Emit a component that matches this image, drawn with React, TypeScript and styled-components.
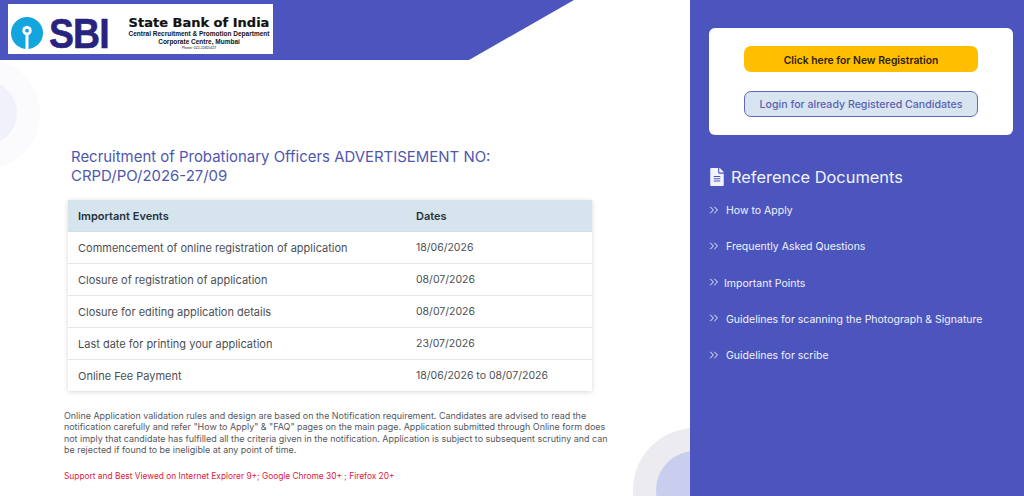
import React from 'react';
import styled, { createGlobalStyle } from 'styled-components';
import { ChevronsRight } from 'lucide-react';
import { FaFileAlt } from 'react-icons/fa';

const indigo = '#4c55bd';

const GlobalStyle = createGlobalStyle`
  html, body {
    margin: 0;
    padding: 0;
    background: #fff;
    font-family: Inter, "Liberation Sans", sans-serif;
  }
`;

const Page = styled.div`
  display: flex;
  width: 1024px;
  height: 496px;
  overflow: hidden;
`;

const Main = styled.main`
  position: relative;
  width: 690px;
  flex: none;
  overflow: hidden;
`;

const Ring = styled.div<{ $size: number; $left: number; $top: number; $color: string }>`
  position: absolute;
  width: ${p => p.$size}px;
  height: ${p => p.$size}px;
  left: ${p => p.$left}px;
  top: ${p => p.$top}px;
  border-radius: 50%;
  background: ${p => p.$color};
`;

const Banner = styled.header`
  position: relative;
  height: 60px;
  width: 574px;
  padding: 4px 0 0 8px;
  box-sizing: border-box;
  background: ${indigo};
  clip-path: polygon(0 0, 100% 0, 469px 100%, 0 100%);
`;

const Logo = styled.div`
  display: flex;
  align-items: center;
  width: 265px;
  height: 50px;
  padding-top: 8px;
  box-sizing: border-box;
  background: #fff;
`;

const Mark = styled.svg`
  flex: none;
  width: 32px;
  height: 32px;
  margin-left: 3px;
`;

const SbiWord = styled.span`
  flex: none;
  width: 58px;
  margin-left: 6px;
  font-family: "Liberation Sans", sans-serif;
  font-size: 43px;
  line-height: 34px;
  font-weight: 700;
  letter-spacing: -1px;
  color: #28237f;
  -webkit-text-stroke: 0.6px #28237f;
  transform: scaleX(0.87);
  transform-origin: left center;
`;

const LogoText = styled.div`
  flex: 1;
  display: flex;
  flex-direction: column;
  align-items: center;
  margin-left: 18px;
  font-family: "Liberation Sans", sans-serif;
  color: #111;
`;

const LogoTitle = styled.div`
  font-family: "DejaVu Sans", sans-serif;
  font-size: 13px;
  line-height: 14px;
  font-weight: 700;
  white-space: nowrap;
  -webkit-text-stroke: 0.2px #111;
`;

const LogoSub = styled.div`
  font-size: 6.5px;
  line-height: 8px;
  font-weight: 700;
  white-space: nowrap;
`;

const LogoPhone = styled.div`
  font-size: 3.5px;
  line-height: 5px;
`;

const Content = styled.div`
  position: relative;
  padding: 88px 0 0 64px;
`;

const Title = styled.h1`
  margin: 0 0 14px 7px;
  width: 440px;
  font-size: 14.95px;
  line-height: 19px;
  font-weight: 400;
  color: #4f58ae;
`;

const EventTable = styled.div`
  width: 524px;
  margin-left: 4px;
  background: #fff;
  box-shadow: 0 1px 5px rgba(0, 0, 0, 0.16);
`;

const Row = styled.div<{ $head?: boolean }>`
  display: grid;
  grid-template-columns: 338px 1fr;
  align-items: center;
  height: 32px;
  padding-left: 10px;
  box-sizing: border-box;
  font-size: 11px;
  font-weight: ${p => (p.$head ? 600 : 400)};
  color: ${p => (p.$head ? '#27323c' : '#4b4f55')};
  background: ${p => (p.$head ? '#d6e4ee' : '#fff')};
  border-bottom: 1px solid ${p => (p.$head ? '#d2dde5' : '#e6e6e6')};

  &:last-child {
    border-bottom: 0;
    height: 31px;
  }
`;

const DateCell = styled.span`
  font-size: 10.5px;
`;

const Note = styled.p`
  width: 548px;
  margin: 19px 0 0;
  font-size: 8.94px;
  line-height: 11.4px;
  color: #54585c;
`;

const Support = styled.p`
  margin: 14px 0 0;
  font-size: 8.35px;
  line-height: 12px;
  color: #e0203a;
`;

const Side = styled.aside`
  flex: 1;
  padding: 28px 11px 0 19px;
  background: ${indigo};
`;

const ActionCard = styled.div`
  display: flex;
  flex-direction: column;
  align-items: center;
  gap: 19px;
  height: 107px;
  padding-top: 18px;
  box-sizing: border-box;
  background: #fff;
  border-radius: 6px;
`;

const ActionButton = styled.div<{ $primary?: boolean }>`
  display: flex;
  align-items: center;
  justify-content: center;
  width: 234px;
  height: 26px;
  padding-top: ${p => (p.$primary ? 2 : 1)}px;
  box-sizing: border-box;
  border-radius: 7px;
  font-size: ${p => (p.$primary ? 10.35 : 10.6)}px;
  font-weight: ${p => (p.$primary ? 600 : 500)};
  background: ${p => (p.$primary ? '#ffbf00' : '#d8e4f0')};
  color: ${p => (p.$primary ? '#2c2109' : '#5a62b0')};
  border: ${p => (p.$primary ? '0' : '1px solid #5f67bd')};
`;

const DocsHeading = styled.h2`
  display: flex;
  align-items: center;
  gap: 7px;
  margin: 31px 0 15px 1px;
  font-size: 16.4px;
  line-height: 22px;
  font-weight: 400;
  color: #f1f3fb;

  svg {
    width: 14px;
    height: 18px;
    flex: none;
  }
`;

const DocList = styled.ul`
  display: flex;
  flex-direction: column;
  gap: 21.3px;
  margin: 0;
  padding: 0;
  list-style: none;
`;

const DocItem = styled.li<{ $tight?: boolean }>`
  display: flex;
  align-items: center;
  height: 15px;
  font-size: 10.5px;
  color: #f0f2fb;

  svg {
    flex: none;
    width: 14px;
    height: 14px;
    color: #fff;
    margin: -2px ${p => (p.$tight ? 3 : 5)}px 0 -2px;
  }
`;

const docs = [
  { label: 'How to Apply' },
  { label: 'Frequently Asked Questions' },
  { label: 'Important Points', tight: true },
  { label: 'Guidelines for scanning the Photograph & Signature' },
  { label: 'Guidelines for scribe' },
];

const events = [
  ['Commencement of online registration of application', '18/06/2026'],
  ['Closure of registration of application', '08/07/2026'],
  ['Closure for editing application details', '08/07/2026'],
  ['Last date for printing your application', '23/07/2026'],
  ['Online Fee Payment', '18/06/2026 to 08/07/2026'],
];

export default function App() {
  return (
    <Page>
      <GlobalStyle />
      <Main>
        <Ring $size={110} $left={-70} $top={59} $color="#fbfbfe" />
        <Ring $size={64} $left={-47} $top={81} $color="#f0f1fb" />
        <Ring $size={124} $left={633} $top={428} $color="#ececf0" />
        <Ring $size={78} $left={656} $top={451} $color="#c9cdee" />
        <Banner>
          <Logo>
            <Mark viewBox="0 0 34 34">
              <circle cx="17" cy="17" r="17" fill="#12a5de" />
              <rect x="15.4" y="15" width="3.2" height="19" fill="#fff" />
              <circle cx="17" cy="14.5" r="5" fill="#fff" />
              <circle cx="17" cy="14.5" r="2" fill="#12a5de" />
            </Mark>
            <SbiWord>SBI</SbiWord>
            <LogoText>
              <LogoTitle>State Bank of India</LogoTitle>
              <LogoSub>Central Recruitment &amp; Promotion Department</LogoSub>
              <LogoSub>Corporate Centre, Mumbai</LogoSub>
              <LogoPhone>Phone: 022-22820427</LogoPhone>
            </LogoText>
          </Logo>
        </Banner>
        <Content>
          <Title>Recruitment of Probationary Officers ADVERTISEMENT NO: CRPD/PO/2026-27/09</Title>
          <EventTable>
            <Row $head>
              <span>Important Events</span>
              <span>Dates</span>
            </Row>
            {events.map(([name, date]) => (
              <Row key={name}>
                <span>{name}</span>
                <DateCell>{date}</DateCell>
              </Row>
            ))}
          </EventTable>
          <Note>
            Online Application validation rules and design are based on the Notification requirement. Candidates are
            advised to read the notification carefully and refer "How to Apply" &amp; "FAQ" pages on the main page.
            Application submitted through Online form does not imply that candidate has fulfilled all the criteria given
            in the notification. Application is subject to subsequent scrutiny and can be rejected if found to be
            ineligible at any point of time.
          </Note>
          <Support>Support and Best Viewed on Internet Explorer 9+; Google Chrome 30+ ; Firefox 20+</Support>
        </Content>
      </Main>
      <Side>
        <ActionCard>
          <ActionButton $primary>Click here for New Registration</ActionButton>
          <ActionButton>Login for already Registered Candidates</ActionButton>
        </ActionCard>
        <DocsHeading>
          <FaFileAlt />
          Reference Documents
        </DocsHeading>
        <DocList>
          {docs.map(doc => (
            <DocItem key={doc.label} $tight={doc.tight}>
              <ChevronsRight strokeWidth={1.6} />
              {doc.label}
            </DocItem>
          ))}
        </DocList>
      </Side>
    </Page>
  );
}
